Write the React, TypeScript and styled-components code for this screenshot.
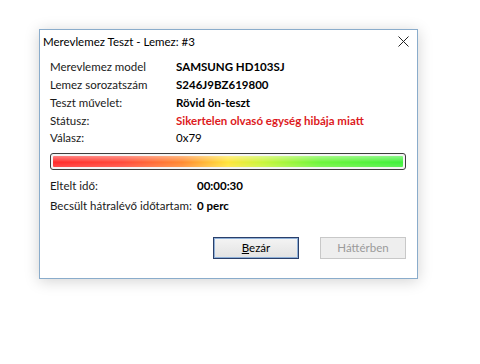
import styled, { createGlobalStyle } from "styled-components";

const GlobalStyle = createGlobalStyle`
  html, body {
    margin: 0;
    padding: 0;
    background: #ffffff;
  }
  body {
    font-family: Lato, "Noto Sans", sans-serif;
    font-size: 11.5px;
    color: #000;
  }
`;

const info = [
  { label: "Merevlemez model", value: "SAMSUNG HD103SJ", kind: "bold" },
  { label: "Lemez sorozatszám", value: "S246J9BZ619800", kind: "bold" },
  { label: "Teszt művelet:", value: "Rövid ön-teszt", kind: "bold" },
  { label: "Státusz:", value: "Sikertelen olvasó egység hibája miatt", kind: "error" },
  { label: "Válasz:", value: "0x79", kind: "plain" },
];

const App = () => {
  return (
    <>
      <GlobalStyle />
      <Page>
        <Window>
          <TitleBar>
            <Title>Merevlemez Teszt - Lemez: #3</Title>
            <CloseButton aria-label="close">
              <svg width="11" height="11" viewBox="0 0 11 11">
                <path d="M0.5 0.5 L10.5 10.5 M10.5 0.5 L0.5 10.5" stroke="#222" strokeWidth="1" />
              </svg>
            </CloseButton>
          </TitleBar>
          <Body>
            <InfoGrid>
              {info.map((row) => (
                <InfoRow key={row.label}>
                  <Label>{row.label}</Label>
                  <Value $kind={row.kind}>{row.value}</Value>
                </InfoRow>
              ))}
            </InfoGrid>

            <Progress>
              <ProgressFill />
            </Progress>

            <TimeGrid>
              <Label>Eltelt idő:</Label>
              <Value $kind="bold">00:00:30</Value>
              <Label>Becsült hátralévő időtartam:</Label>
              <Value $kind="bold">0 perc</Value>
            </TimeGrid>

            <Buttons>
              <Button $primary>
                <u>B</u>ezár
              </Button>
              <Button disabled>Háttérben</Button>
            </Buttons>
          </Body>
        </Window>
      </Page>
    </>
  );
};

export default App;

const Page = styled.div`
  width: 480px;
  height: 364px;
  padding: 29px 0 0 39px;
  box-sizing: border-box;
`;

const Window = styled.div`
  width: 379px;
  height: 250px;
  box-sizing: border-box;
  border: 1px solid #8aaccb;
  background: #ffffff;
  box-shadow: 0 2px 14px rgba(0, 0, 0, 0.18);
  display: flex;
  flex-direction: column;
`;

const TitleBar = styled.div`
  height: 22px;
  display: flex;
  align-items: center;
  justify-content: space-between;
  padding: 0 6px 0 3px;
`;

const Title = styled.span`
  font-size: 11.5px;
  color: #000;
  padding-top: 1px;
`;

const CloseButton = styled.div`
  width: 14px;
  height: 14px;
  display: flex;
  align-items: center;
  justify-content: center;
  margin-right: 1px;
`;

const Body = styled.div`
  flex: 1;
  padding: 6px 11px 0 10px;
  display: flex;
  flex-direction: column;
`;

const InfoGrid = styled.div`
  display: flex;
  flex-direction: column;
`;

const InfoRow = styled.div`
  display: grid;
  grid-template-columns: 126px 1fr;
  height: 17.75px;
  align-items: center;
`;

const Label = styled.span`
  color: #1a1a1a;
  white-space: nowrap;
`;

const Value = styled.span<{ $kind: string }>`
  white-space: nowrap;
  font-size: 11.5px;
  font-weight: ${(p) => (p.$kind === "plain" ? 400 : 700)};
  color: ${(p) => (p.$kind === "error" ? "#dd1a22" : "#000")};
`;

const Progress = styled.div`
  margin-top: 6px;
  height: 17px;
  box-sizing: border-box;
  border: 1px solid #3c3c3c;
  border-radius: 3px;
  padding: 2px;
  background: #f4f4f4;
`;

const ProgressFill = styled.div`
  height: 100%;
  border-radius: 1px;
  background:
    linear-gradient(
      to bottom,
      rgba(255, 255, 255, 0.4) 0%,
      rgba(255, 255, 255, 0.1) 45%,
      rgba(0, 0, 0, 0) 55%,
      rgba(255, 255, 255, 0.15) 100%
    ),
    linear-gradient(
      to right,
      #ff2a2a 0%,
      #ff4a3a 20%,
      #ff8a30 37%,
      #ffe53a 50%,
      #c8f53a 60%,
      #6ef53a 76%,
      #3ef03a 100%
    );
`;

const TimeGrid = styled.div`
  display: grid;
  grid-template-columns: 147px 1fr;
  grid-auto-rows: 20px;
  align-items: center;
  margin-top: 6px;
`;

const Buttons = styled.div`
  display: flex;
  justify-content: flex-end;
  gap: 21px;
  margin-top: 21px;
`;

const Button = styled.button<{ $primary?: boolean }>`
  width: 86px;
  height: 22px;
  box-sizing: border-box;
  font-family: inherit;
  font-size: 11.5px;
  padding: 0;
  border-radius: 0;
  border: 1px solid ${(p) => (p.$primary ? "#2a3f6a" : "#c8c8c8")};
  background: ${(p) => (p.$primary ? "linear-gradient(#f4f4f4, #e2e2e2)" : "#eeeeee")};
  color: ${(p) => (p.$primary ? "#000" : "#9a9a9a")};
  box-shadow: ${(p) => (p.$primary ? "inset 0 0 0 1px #8fb0d8" : "none")};
`;
